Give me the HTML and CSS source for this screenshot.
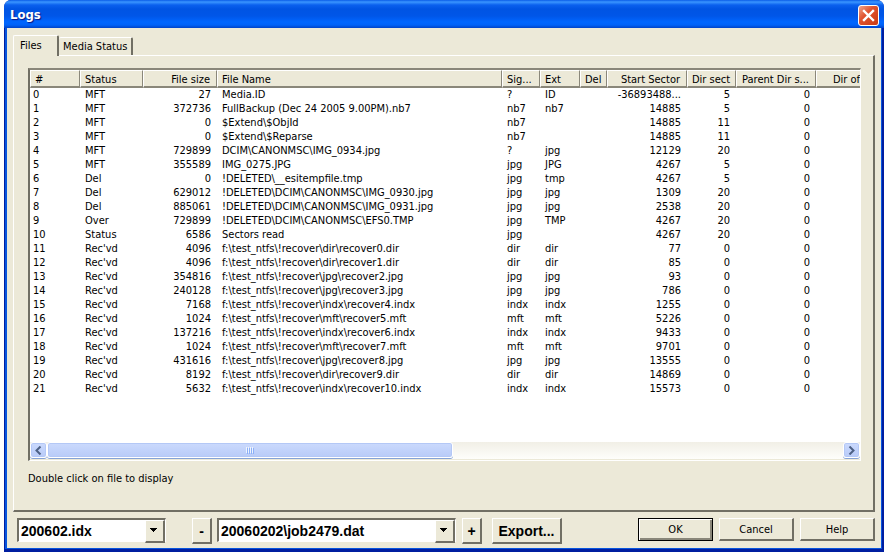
FILE: index.html
```
<!DOCTYPE html>
<html lang="en">
<head>
<meta charset="UTF-8">
<title>Logs</title>
<link rel="stylesheet" href="styles.css">
</head>
<body>
<div class="window">
	<div class="title-bar">
		<h1>Logs</h1>
		<button class="close" type="button" aria-label="Close">
			<svg width="13" height="13" viewBox="0 0 13 13"><path d="M2 2l9 9M11 2l-9 9" stroke="#fff" stroke-width="2.4" stroke-linecap="square"/></svg>
		</button>
	</div>
	<div class="client">
		<div class="tabs" role="tablist">
			<button class="tab active" type="button" role="tab" aria-selected="true">Files</button>
			<button class="tab" type="button" role="tab" aria-selected="false">Media Status</button>
		</div>
		<div class="panel">
			<div class="list">
				<div class="list-body">
					<table>
						<colgroup>
							<col class="c-num"><col class="c-status"><col class="c-size"><col class="c-name"><col class="c-sig"><col class="c-ext"><col class="c-del"><col class="c-start"><col class="c-dir"><col class="c-parent"><col>
						</colgroup>
						<thead>
							<tr><th>#</th><th>Status</th><th>File size</th><th>File Name</th><th>Sig...</th><th>Ext</th><th>Del</th><th>Start Sector</th><th>Dir sect</th><th>Parent Dir s...</th><th>Dir of</th></tr>
						</thead>
						<tbody>
							<tr><td>0</td><td>MFT</td><td>27</td><td>Media.ID</td><td>?</td><td>ID</td><td></td><td>-36893488...</td><td>5</td><td>0</td><td></td></tr>
							<tr><td>1</td><td>MFT</td><td>372736</td><td>FullBackup (Dec 24 2005 9.00PM).nb7</td><td>nb7</td><td>nb7</td><td></td><td>14885</td><td>5</td><td>0</td><td></td></tr>
							<tr><td>2</td><td>MFT</td><td>0</td><td>$Extend\$ObjId</td><td>nb7</td><td></td><td></td><td>14885</td><td>11</td><td>0</td><td></td></tr>
							<tr><td>3</td><td>MFT</td><td>0</td><td>$Extend\$Reparse</td><td>nb7</td><td></td><td></td><td>14885</td><td>11</td><td>0</td><td></td></tr>
							<tr><td>4</td><td>MFT</td><td>729899</td><td>DCIM\CANONMSC\IMG_0934.jpg</td><td>?</td><td>jpg</td><td></td><td>12129</td><td>20</td><td>0</td><td></td></tr>
							<tr><td>5</td><td>MFT</td><td>355589</td><td>IMG_0275.JPG</td><td>jpg</td><td>JPG</td><td></td><td>4267</td><td>5</td><td>0</td><td></td></tr>
							<tr><td>6</td><td>Del</td><td>0</td><td>!DELETED\__esitempfile.tmp</td><td>jpg</td><td>tmp</td><td></td><td>4267</td><td>5</td><td>0</td><td></td></tr>
							<tr><td>7</td><td>Del</td><td>629012</td><td>!DELETED\DCIM\CANONMSC\IMG_0930.jpg</td><td>jpg</td><td>jpg</td><td></td><td>1309</td><td>20</td><td>0</td><td></td></tr>
							<tr><td>8</td><td>Del</td><td>885061</td><td>!DELETED\DCIM\CANONMSC\IMG_0931.jpg</td><td>jpg</td><td>jpg</td><td></td><td>2538</td><td>20</td><td>0</td><td></td></tr>
							<tr><td>9</td><td>Over</td><td>729899</td><td>!DELETED\DCIM\CANONMSC\EFS0.TMP</td><td>jpg</td><td>TMP</td><td></td><td>4267</td><td>20</td><td>0</td><td></td></tr>
							<tr><td>10</td><td>Status</td><td>6586</td><td>Sectors read</td><td>jpg</td><td></td><td></td><td>4267</td><td>20</td><td>0</td><td></td></tr>
							<tr><td>11</td><td>Rec'vd</td><td>4096</td><td>f:\test_ntfs\!recover\dir\recover0.dir</td><td>dir</td><td>dir</td><td></td><td>77</td><td>0</td><td>0</td><td></td></tr>
							<tr><td>12</td><td>Rec'vd</td><td>4096</td><td>f:\test_ntfs\!recover\dir\recover1.dir</td><td>dir</td><td>dir</td><td></td><td>85</td><td>0</td><td>0</td><td></td></tr>
							<tr><td>13</td><td>Rec'vd</td><td>354816</td><td>f:\test_ntfs\!recover\jpg\recover2.jpg</td><td>jpg</td><td>jpg</td><td></td><td>93</td><td>0</td><td>0</td><td></td></tr>
							<tr><td>14</td><td>Rec'vd</td><td>240128</td><td>f:\test_ntfs\!recover\jpg\recover3.jpg</td><td>jpg</td><td>jpg</td><td></td><td>786</td><td>0</td><td>0</td><td></td></tr>
							<tr><td>15</td><td>Rec'vd</td><td>7168</td><td>f:\test_ntfs\!recover\indx\recover4.indx</td><td>indx</td><td>indx</td><td></td><td>1255</td><td>0</td><td>0</td><td></td></tr>
							<tr><td>16</td><td>Rec'vd</td><td>1024</td><td>f:\test_ntfs\!recover\mft\recover5.mft</td><td>mft</td><td>mft</td><td></td><td>5226</td><td>0</td><td>0</td><td></td></tr>
							<tr><td>17</td><td>Rec'vd</td><td>137216</td><td>f:\test_ntfs\!recover\indx\recover6.indx</td><td>indx</td><td>indx</td><td></td><td>9433</td><td>0</td><td>0</td><td></td></tr>
							<tr><td>18</td><td>Rec'vd</td><td>1024</td><td>f:\test_ntfs\!recover\mft\recover7.mft</td><td>mft</td><td>mft</td><td></td><td>9701</td><td>0</td><td>0</td><td></td></tr>
							<tr><td>19</td><td>Rec'vd</td><td>431616</td><td>f:\test_ntfs\!recover\jpg\recover8.jpg</td><td>jpg</td><td>jpg</td><td></td><td>13555</td><td>0</td><td>0</td><td></td></tr>
							<tr><td>20</td><td>Rec'vd</td><td>8192</td><td>f:\test_ntfs\!recover\dir\recover9.dir</td><td>dir</td><td>dir</td><td></td><td>14869</td><td>0</td><td>0</td><td></td></tr>
							<tr><td>21</td><td>Rec'vd</td><td>5632</td><td>f:\test_ntfs\!recover\indx\recover10.indx</td><td>indx</td><td>indx</td><td></td><td>15573</td><td>0</td><td>0</td><td></td></tr>
						</tbody>
					</table>
				</div>
				<div class="scrollbar">
					<button class="arrow" type="button" aria-label="Scroll left">
						<svg width="9" height="9" viewBox="0 0 9 9"><path d="M6.500 0.500l-4 4 4 4" fill="none" stroke="#4d6185" stroke-width="2"/></svg>
					</button>
					<div class="track">
						<div class="thumb"><i></i><i></i><i></i><i></i></div>
					</div>
					<button class="arrow" type="button" aria-label="Scroll right">
						<svg width="9" height="9" viewBox="0 0 9 9"><path d="M2.500 0.500l4 4-4 4" fill="none" stroke="#4d6185" stroke-width="2"/></svg>
					</button>
				</div>
			</div>
			<p class="hint">Double click on file to display</p>
		</div>
		<div class="footer">
			<div class="combo index">
				<select aria-label="Index file"><option>200602.idx</option></select>
			</div>
			<button class="btn step" type="button">-</button>
			<div class="combo job">
				<select aria-label="Job file"><option>20060202\job2479.dat</option></select>
			</div>
			<button class="btn step" type="button">+</button>
			<button class="btn export" type="button">Export...</button>
			<div class="actions">
				<button class="btn default" type="button">OK</button>
				<button class="btn" type="button">Cancel</button>
				<button class="btn" type="button">Help</button>
			</div>
		</div>
	</div>
</div>
</body>
</html>
```
FILE: styles.css
```
*{
	box-sizing: border-box;
}
body{
	margin: 0;
	padding-left: 4px;
	background: #fff;
	color: #000;
	font: 11px/14px "DejaVu Sans Condensed","Noto Sans",sans-serif;
}
h1,p{
	margin: 0;
}
button,select{
	margin: 0;
	padding: 0;
	color: #000;
	font: inherit;
}
.window{
	display: flex;
	flex-direction: column;
	min-height: 100vh;
	background: #001ea0;
	border-radius: 7px 7px 0 0;
	overflow: hidden;
}
.title-bar{
	display: flex;
	align-items: center;
	justify-content: space-between;
	height: 28px;
	padding: 2px 5px 0 6px;
	background: linear-gradient(#0a5ce8 0,#3a95ff 2px,#0a60ee 5px,#0054e3 9px,#0056e8 16px,#0066ff 22px,#0062f8 25px,#0043c8 28px);
}
.title-bar h1{
	color: #fff;
	font: bold 13px/16px "DejaVu Sans Condensed","Noto Sans",sans-serif;
	text-shadow: 1px 1px 1px #0a1883;
}
.close{
	display: flex;
	align-items: center;
	justify-content: center;
	width: 21px;
	height: 21px;
	border: 1px solid #fff;
	border-radius: 3px;
	background: linear-gradient(135deg,#f0a58c,#e0532f 40%,#c93a12);
}
.client{
	display: flex;
	flex-direction: column;
	flex: 1;
	margin: 0 2px 3px 1px;
	padding: 7px 6px 4px;
	background: #ece9d8;
	border: 1px solid #0855dd;
	border-width: 0 1px 1px 2px;
}

/* tabs */
.tabs{
	display: flex;
	align-items: flex-end;
	position: relative;
	z-index: 1;
	margin-bottom: -1px;
}
.tab{
	height: 18px;
	margin-bottom: 1px;
	padding: 1px 4px 0;
	background: #ece9d8;
	border: 1px solid #fff;
	border-width: 1px 2px 0 0;
	border-right-color: #716f64;
	border-radius: 2px 2px 0 0;
}
.tab.active{
	height: 21px;
	width: 46px;
	margin-bottom: 0;
	padding: 0 6px 1px;
	border-left: 1px solid #fff;
	text-align: left;
}
.panel{
	display: flex;
	flex-direction: column;
	flex: 1;
	padding: 12px 12px 24px 14px;
	border: 1px solid #fff;
	border-right: 2px solid #716f64;
	border-bottom: 2px solid #716f64;
}

/* file list */
.list{
	display: flex;
	flex-direction: column;
	flex: 1;
	background: #fff;
	border: 2px solid #716f64;
	border-top-color: #8a877a;
	border-right: 1px solid #fff;
	border-bottom: 1px solid #fff;
}
.list-body{
	flex: 1;
	overflow: hidden;
}
table{
	width: 100%;
	table-layout: fixed;
	border-collapse: separate;
	border-spacing: 0;
}
.c-num{ width: 50px; }
.c-status{ width: 63px; }
.c-size{ width: 74px; }
.c-name{ width: 285px; }
.c-sig{ width: 38px; }
.c-ext{ width: 40px; }
.c-del{ width: 27px; }
.c-start{ width: 80px; }
.c-dir{ width: 49px; }
.c-parent{ width: 80px; }
th,td{
	height: 14px;
	padding: 0 6px 0 5px;
	font-weight: normal;
	text-align: left;
	white-space: nowrap;
}
th{
	height: 18px;
	padding: 2px 4px 0 4px;
	background: #ece9d8;
	border-top: 1px solid #fff;
	border-left: 1px solid #fff;
	border-right: 1px solid #8a877a;
	border-bottom: 2px solid #8a877a;
	line-height: 13px;
}
td:first-child{
	padding-left: 3px;
}
th:nth-child(3),td:nth-child(3),
th:nth-child(n+8),td:nth-child(n+8){
	text-align: right;
	padding-right: 6px;
}
th:last-child{
	padding-right: 0;
	border-right: 0;
}
.scrollbar{
	display: flex;
	height: 18px;
	background: linear-gradient(#f1efe6,#fefefb);
	border-bottom: 1px solid #ece9d8;
}
.track{
	flex: 1;
	display: flex;
}
.arrow,.thumb{
	display: flex;
	align-items: center;
	justify-content: center;
	height: 16px;
	background: linear-gradient(#cbdafd,#b8cbf8);
	border: 1px solid #fff;
	border-radius: 3px;
	box-shadow: inset 0 0 0 1px #b4c8f6,0 1px 0 #86a3d6;
}
.arrow{
	width: 17px;
}
.thumb{
	width: 51%;
	gap: 1px;
}
.thumb i{
	width: 1px;
	height: 6px;
	background: #eef4fe;
	box-shadow: 1px 1px 0 #8cb0f8;
}
.hint{
	margin-top: 11px;
	line-height: 14px;
}

/* bottom row */
.footer{
	display: flex;
	align-items: flex-start;
	padding: 6px 0 0 4px;
}
.combo{
	position: relative;
	height: 24px;
	background: #fff;
	border: 2px solid #716f64;
	border-right: 1px solid #fff;
	border-bottom: 1px solid #fff;
}
.combo select{
	appearance: none;
	display: block;
	width: 100%;
	height: 21px;
	padding: 0 20px 0 2px;
	background: none;
	border: 0;
	font: bold 14px/20px "Liberation Sans",Arial,sans-serif;
}
.combo::after{
	content: "";
	position: absolute;
	top: 0;
	right: 0;
	width: 17px;
	height: 20px;
	background: linear-gradient(#000,#000) 4px 7px/7px 1px no-repeat,linear-gradient(#000,#000) 5px 8px/5px 1px no-repeat,linear-gradient(#000,#000) 6px 9px/3px 1px no-repeat,linear-gradient(#000,#000) 7px 10px/1px 1px no-repeat,#ece9d8;
	border: 1px solid #fff;
	border-right: 2px solid #716f64;
	border-bottom: 2px solid #716f64;
	pointer-events: none;
}
.index{
	width: 149px;
	margin-right: 26px;
}
.job{
	width: 239px;
	margin: 0 6px 0 5px;
}
.btn{
	width: 75px;
	height: 23px;
	padding-top: 1px;
	background: #ece9d8;
	border: 1px solid #fff;
	border-right: 2px solid #716f64;
	border-bottom: 2px solid #716f64;
}
.btn.step{
	width: 20px;
	height: 26px;
	font: bold 14px/20px "Liberation Sans",Arial,sans-serif;
}
.btn.export{
	width: 70px;
	height: 26px;
	margin-left: 10px;
	font: bold 14px/20px "Liberation Sans",Arial,sans-serif;
}
.btn.default{
	border: 1px solid #000;
	box-shadow: inset 1px 1px 0 #fff,inset -2px -2px 0 #8a877a;
}
.actions{
	display: flex;
	gap: 6px;
	margin-left: auto;
}
```
